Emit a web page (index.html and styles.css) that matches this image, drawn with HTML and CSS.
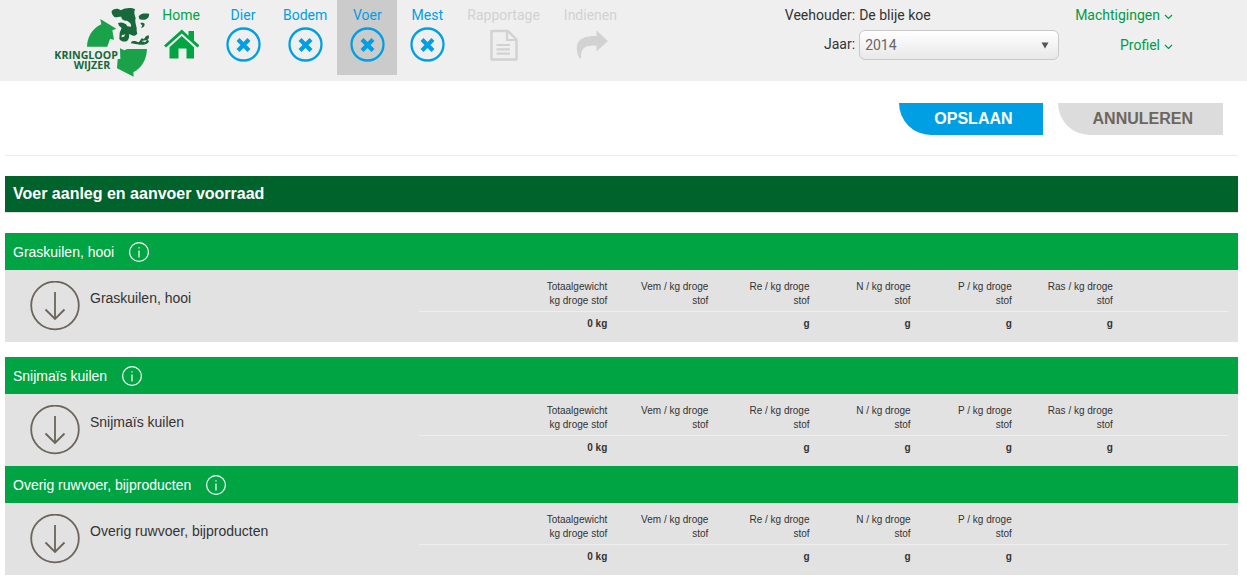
FILE: index.html
```
<!DOCTYPE html>
<html lang="nl">
<head>
<meta charset="utf-8">
<title>Kringloopwijzer</title>
<link rel="stylesheet" href="styles.css">
</head>
<body>
<svg class="symbols" aria-hidden="true">
  <symbol id="cross-circle" viewBox="0 0 35 35">
    <circle cx="17.5" cy="17.5" r="16" fill="none" stroke="currentColor" stroke-width="2.3"/>
    <path d="M13.500 14l8 8M21.500 14l-8 8" fill="none" stroke="currentColor" stroke-width="4.200" stroke-linecap="square" stroke-linejoin="round"/>
  </symbol>
  <symbol id="info" viewBox="0 0 20 20">
    <circle cx="10" cy="10" r="9.400" fill="none" stroke="currentColor" stroke-width="1.200"/>
    <path d="M10 8.500V15.500M10 5.300V6.600" fill="none" stroke="currentColor" stroke-width="1.200"/>
  </symbol>
  <symbol id="arrow-down" viewBox="0 0 50 50">
    <circle cx="25" cy="24.500" r="23.800" fill="none" stroke="currentColor" stroke-width="1.800"/>
    <path d="M25 11V38M15.500 28.500L25 38L34.500 28.500" fill="none" stroke="currentColor" stroke-width="1.800"/>
  </symbol>
  <symbol id="chevron" viewBox="0 0 9 6">
    <path d="M1 1L4.500 4.500L8 1" fill="none" stroke="currentColor" stroke-width="1.200"/>
  </symbol>
</svg>

<header class="topbar">
  <a class="logo" href="#" aria-label="Kringloopwijzer">
    <svg width="98" height="72" viewBox="39 15 294 216">
      <path fill="#1aa24b" d="M141 140C142 112 156 86 184 73L181 57L229 86L217 91L222 119L210 117L202 140Z"/>
      <path fill="#1aa24b" d="M262 147H321C320 177 306 204 280 217L281 230L231 205L233 177L241 177L240 145L253 151Z"/>
      <path fill="#17683a" d="M215 33C222 25 234 24 243 31C255 22 275 22 285 27C281 38 284 46 287 54C284 62 287 72 290 84C290 90 290 96 292 101C287 107 281 109 274 105L267 102C269 111 266 119 260 124C249 126 240 122 238 116L239 98L245 84L237 77L234 69C243 65 252 68 258 73L262 79L273 80C275 72 269 66 260 62C252 62 244 58 244 50C234 50 227 54 222 50C217 45 214 39 215 33Z"/>
      <path fill="#17683a" d="M296 49C302 40 313 40 327 41C329 50 323 57 313 59C307 60 301 59 298 57ZM301 70C306 67 314 69 314 74C313 80 308 84 303 83L307 77Z"/>
      <path fill="#17683a" d="M276 124C284 121 290 124 296 127C302 123 301 116 307 115C311 119 315 115 316 110L325 105C328 109 328 116 322 120L327 122C326 131 313 136 300 134C289 134 281 130 272 130Z"/>
      <path fill="#efefef" d="M245 106L256 103L252 110L245 112ZM304 123L321 120L315 127Z"/>
      <text class="logo-text"><tspan x="43" y="176">KRINGLOOP</tspan><tspan x="101" y="207">WIJZER</tspan></text>
    </svg>
  </a>
  <nav class="nav">
    <div class="nav-group">
      <a class="nav-item home" href="#">Home
        <svg class="nav-icon" viewBox="0 0 35 35"><path d="M0 18.500L17.800 2.500L24.500 8.700V4H30V13.500L35.500 18.500L33.500 20.500L17.800 6.500L2 20.500Z"/><path d="M17.800 9L30 20.300V31.500H22.500V21.500H14.500V31.500H5.500V20.300Z"/></svg>
      </a>
      <a class="nav-item" href="#">Dier<svg class="nav-icon"><use href="#cross-circle"/></svg></a>
      <a class="nav-item" href="#">Bodem<svg class="nav-icon"><use href="#cross-circle"/></svg></a>
      <a class="nav-item active" href="#" aria-current="page">Voer<svg class="nav-icon"><use href="#cross-circle"/></svg></a>
    </div>
    <div class="nav-group">
      <a class="nav-item" href="#">Mest<svg class="nav-icon"><use href="#cross-circle"/></svg></a>
    </div>
    <div class="nav-group disabled">
      <a class="nav-item" aria-disabled="true">Rapportage
        <svg class="nav-icon" viewBox="0 0 35 35"><path d="M5.500 4H22L30.500 12.500V32.500H5.500Z" fill="none" stroke="currentColor" stroke-width="2.400" stroke-linejoin="round"/><path d="M21 4V13H30.500M10.500 18H24M10.500 22.300H24M10.500 26.600H24" fill="none" stroke="currentColor" stroke-width="2.200"/></svg>
      </a>
      <a class="nav-item" aria-disabled="true">Indienen
        <svg class="nav-icon" viewBox="0 0 35 35"><path d="M23.500 3.500L35 14L23.500 24.500V18.500C12 18 7.500 20.500 8 31.500H6.500C0 17 5 8.500 23.500 9Z"/></svg>
      </a>
    </div>
  </nav>
  <div class="account">
    <span class="account-label">Veehouder:</span>
    <span>De blije koe</span>
    <label class="account-label" for="jaar">Jaar:</label>
    <span class="select-box">
      <select id="jaar"><option>2014</option></select>
      <svg class="select-arrow" viewBox="0 0 8 7"><path d="M.5 .5H7.500L4 6.500Z" fill="#555"/></svg>
    </span>
  </div>
  <div class="user-links">
    <a href="#">Machtigingen<svg class="chevron"><use href="#chevron"/></svg></a>
    <a href="#">Profiel<svg class="chevron"><use href="#chevron"/></svg></a>
  </div>
</header>

<main class="content">
  <div class="actions">
    <button class="btn save" type="button">OPSLAAN</button>
    <button class="btn cancel" type="button">ANNULEREN</button>
  </div>
  <h1 class="page-title">Voer aanleg en aanvoer voorraad</h1>

  <section class="stock spaced">
    <h2 class="stock-title">Graskuilen, hooi <svg class="info"><use href="#info"/></svg></h2>
    <div class="stock-body">
      <button class="expand" type="button" aria-label="Graskuilen, hooi openen"><svg><use href="#arrow-down"/></svg></button>
      <div class="stock-name">Graskuilen, hooi</div>
      <table class="figures">
        <thead><tr><td></td><th>Totaalgewicht kg droge stof</th><th>Vem / kg droge stof</th><th>Re / kg droge stof</th><th>N / kg droge stof</th><th>P / kg droge stof</th><th>Ras / kg droge stof</th><td></td></tr></thead>
        <tbody><tr><td></td><td>0 kg</td><td></td><td>g</td><td>g</td><td>g</td><td>g</td><td></td></tr></tbody>
      </table>
    </div>
  </section>

  <section class="stock">
    <h2 class="stock-title">Snijmaïs kuilen <svg class="info"><use href="#info"/></svg></h2>
    <div class="stock-body">
      <button class="expand" type="button" aria-label="Snijmaïs kuilen openen"><svg><use href="#arrow-down"/></svg></button>
      <div class="stock-name">Snijmaïs kuilen</div>
      <table class="figures">
        <thead><tr><td></td><th>Totaalgewicht kg droge stof</th><th>Vem / kg droge stof</th><th>Re / kg droge stof</th><th>N / kg droge stof</th><th>P / kg droge stof</th><th>Ras / kg droge stof</th><td></td></tr></thead>
        <tbody><tr><td></td><td>0 kg</td><td></td><td>g</td><td>g</td><td>g</td><td>g</td><td></td></tr></tbody>
      </table>
    </div>
  </section>

  <section class="stock">
    <h2 class="stock-title">Overig ruwvoer, bijproducten <svg class="info"><use href="#info"/></svg></h2>
    <div class="stock-body">
      <button class="expand" type="button" aria-label="Overig ruwvoer, bijproducten openen"><svg><use href="#arrow-down"/></svg></button>
      <div class="stock-name">Overig ruwvoer, bijproducten</div>
      <table class="figures">
        <thead><tr><td></td><th>Totaalgewicht kg droge stof</th><th>Vem / kg droge stof</th><th>Re / kg droge stof</th><th>N / kg droge stof</th><th>P / kg droge stof</th><td></td><td></td></tr></thead>
        <tbody><tr><td></td><td>0 kg</td><td></td><td>g</td><td>g</td><td>g</td><td></td><td></td></tr></tbody>
      </table>
    </div>
  </section>
</main>
</body>
</html>
```

FILE: styles.css
```
* { box-sizing: border-box; }

body {
  margin: 0;
  background: #fff;
  color: #333;
  font: 14px/20px "Liberation Sans", Arial, sans-serif;
}

a { text-decoration: none; }
.symbols { position: absolute; width: 0; height: 0; }

/* Top bar */
.topbar {
  display: flex;
  align-items: flex-start;
  min-height: 81px;
  padding: 0 74px 0 53px;
  background: #efefef;
  font-family: Roboto, sans-serif;
}

.logo { padding-top: 5px; }
.logo svg { display: block; }
.logo-text {
  font: bold 32px "Open Sans", sans-serif;
  fill: #17683a;
}

.nav { display: flex; }
.nav-group { display: flex; gap: 2px; }
.nav-group.disabled { gap: 8px; }

.nav-item {
  display: flex;
  flex-direction: column;
  align-items: center;
  min-width: 60px;
  height: 75px;
  padding: 5px 8px 0;
  gap: 2px;
  color: #009fe3;
}
.nav-item.home { color: #00a443; }
.nav-item.active { background: #cbcbcb; }
.disabled .nav-item { color: #d2d2d2; }
.disabled { margin-left: 2px; }
.nav-icon { width: 35px; height: 35px; fill: currentColor; }

.account {
  display: grid;
  grid-template-columns: auto 200px;
  column-gap: 4px;
  margin-left: auto;
  padding-top: 5px;
}
.account-label { text-align: right; }
.account-label[for] { padding-top: 9px; }

.select-box {
  position: relative;
  display: block;
  margin-top: 5px;
}
.select-box select {
  appearance: none;
  display: block;
  width: 100%;
  height: 30px;
  padding: 0 5px;
  border: 1px solid #c8c8c8;
  border-radius: 6px;
  background: linear-gradient(#fff, #e8e8e8);
  color: #666;
  font: 14px Roboto, sans-serif;
}
.select-arrow {
  position: absolute;
  right: 10px;
  top: 12px;
  width: 8px;
  height: 7px;
  pointer-events: none;
}

.user-links {
  display: flex;
  flex-direction: column;
  align-items: flex-end;
  gap: 10px;
  margin-left: 16px;
  padding-top: 5px;
}
.user-links a { color: #009b48; }
.chevron { width: 9px; height: 6px; margin-left: 4px; }

/* Page content */
.content { padding: 22px 9px 8px 5px; }

.actions {
  display: flex;
  justify-content: flex-end;
  gap: 15px;
  padding: 0 15px 20px 0;
  border-bottom: 1px solid #ececec;
}

.btn {
  height: 32px;
  padding: 0 30px 0 35px;
  border: 0;
  border-bottom-left-radius: 32px;
  font: bold 16px "Liberation Sans", Arial, sans-serif;
}
.save { background: #009fe3; color: #fff; }
.cancel { background: #dcdcdc; color: #6d665c; }

.page-title {
  margin: 20px 0;
  padding: 8px;
  border-bottom: 1px solid #ddd;
  background: #00632b;
  background-clip: padding-box;
  color: #fff;
  font-size: 16px;
  line-height: 20px;
}

.stock.spaced { margin-bottom: 15px; }

.stock-title {
  display: flex;
  align-items: center;
  gap: 15px;
  height: 37px;
  margin: 0;
  padding: 0 8px;
  background: #00a443;
  color: #fff;
  font-size: 14px;
  font-weight: normal;
}
.info { width: 20px; height: 20px; }

.stock-body {
  display: grid;
  grid-template-columns: 50px 319px 1fr;
  padding: 0 10px 0 25px;
  column-gap: 10px;
  min-height: 72px;
  background: #e2e2e2;
}

.expand {
  width: 50px;
  height: 50px;
  margin-top: 11px;
  padding: 0;
  border: 0;
  background: none;
  color: #6b655a;
}
.expand svg { display: block; width: 50px; height: 50px; }

.stock-name { padding-top: 18px; }

.figures {
  align-self: start;
  width: 100%;
  border-collapse: collapse;
  table-layout: fixed;
  font-size: 10px;
  line-height: 14px;
  text-align: right;
}
.figures th {
  padding: 10px 14px 3px 17px;
  font-weight: normal;
  text-align: right;
}
.figures thead tr { border-bottom: 1px solid #efefef; }
.figures tbody td {
  padding: 5px 14px 11px 17px;
  font-weight: bold;
}
```
